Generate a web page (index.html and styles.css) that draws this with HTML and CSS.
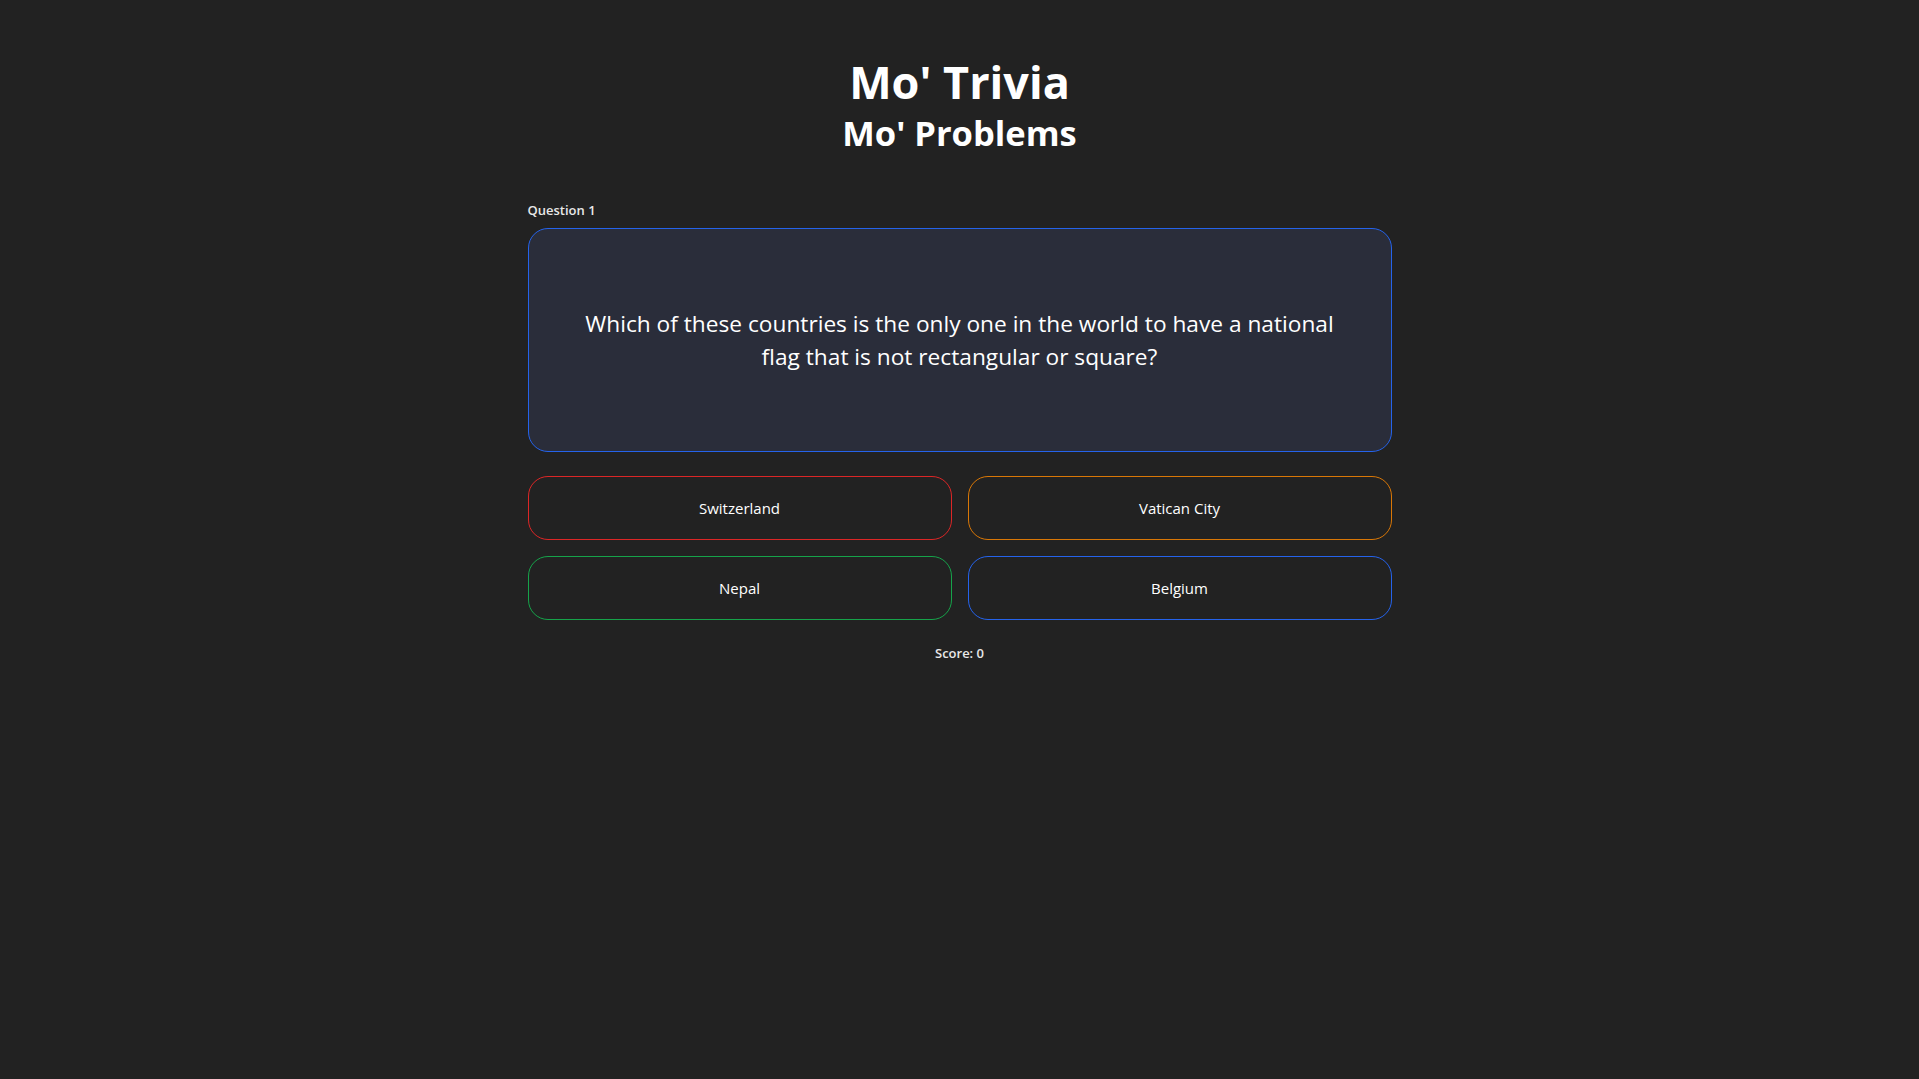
FILE: index.html
```html
<!DOCTYPE html>
<html lang="en">
<head>
    <meta charset="UTF-8">
    <meta name="viewport" content="width=device-width, initial-scale=1.0">
    <title>Mo' Trivia</title>
    <link rel="stylesheet" href="styles.css">
</head>
<body>
    <header class="title-block">
        <h1>Mo' Trivia</h1>
        <h2>Mo' Problems</h2>
    </header>

    <main class="quiz">
        <p class="question-label" id="question-label">Question 1</p>
        <div class="question-card">
            <p id="question-text">Which of these countries is the only one in the world to have a national flag that is not rectangular or square?</p>
        </div>

        <div class="answers" id="answers">
            <button class="answer answer-red">Switzerland</button>
            <button class="answer answer-orange">Vatican City</button>
            <button class="answer answer-green">Nepal</button>
            <button class="answer answer-blue">Belgium</button>
        </div>

        <p class="score" id="score">Score: 0</p>
    </main>
</body>
</html>
```

FILE: styles.css
```css
:root {
    --bg-color: #222222;
    --card-color: #2a2d3a;
    --text-color: #ffffff;
    --red: #dc2626;
    --orange: #d97706;
    --green: #16a34a;
    --blue: #2563eb;
}

* {
    margin: 0;
    padding: 0;
    box-sizing: border-box;
}

body {
    font-family: 'Open Sans', 'Noto Sans', sans-serif;
    background-color: var(--bg-color);
    color: var(--text-color);
}

/* Header */
.title-block {
    text-align: center;
    padding-top: 54px;
}

.title-block h1 {
    font-size: 45px;
    line-height: 56px;
    font-weight: 700;
}

.title-block h2 {
    font-size: 34.5px;
    line-height: 42px;
    margin-top: 2px;
    font-weight: 700;
}

/* Quiz */
.quiz {
    width: 864px;
    margin: 47px auto 0;
}

.question-label {
    font-size: 13px;
    line-height: 18px;
    font-weight: 600;
    margin-bottom: 9px;
    color: #e8e8e8;
}

.question-card {
    min-height: 224px;
    display: flex;
    align-items: center;
    justify-content: center;
    padding: 0 48px;
    background: var(--card-color);
    border: 1px solid var(--blue);
    border-radius: 20px;
    text-align: center;
    font-size: 22.7px;
    line-height: 33px;
}

.answers {
    display: grid;
    grid-template-columns: 1fr 1fr;
    gap: 16px;
    margin-top: 24px;
}

.answer {
    height: 64px;
    background: transparent;
    color: var(--text-color);
    border: 1px solid;
    border-radius: 20px;
    font-family: inherit;
    font-size: 15px;
    cursor: pointer;
}

.answer-red { border-color: var(--red); }
.answer-orange { border-color: var(--orange); }
.answer-green { border-color: var(--green); }
.answer-blue { border-color: var(--blue); }

.score {
    text-align: center;
    font-size: 13px;
    font-weight: 600;
    margin-top: 24px;
    color: #e8e8e8;
}
```
